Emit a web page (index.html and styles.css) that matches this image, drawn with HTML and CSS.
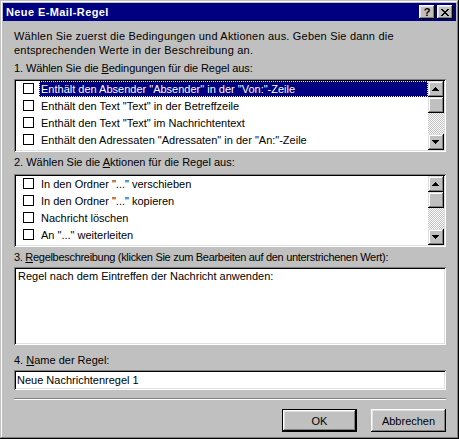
FILE: index.html
```html
<!DOCTYPE html>
<html lang="de">

<head>
    <meta charset="UTF-8">
    <meta name="viewport" content="width=device-width, initial-scale=1.0">
    <title>Neue E-Mail-Regel</title>
    <link rel="stylesheet" href="styles.css">
</head>

<body>
    <div class="window">
        <div class="titlebar">
            <span class="title">Neue E-Mail-Regel</span>
            <div class="caption-buttons">
                <button class="cbtn help">?</button>
                <button class="cbtn close">
                    <svg width="8" height="7" viewBox="0 0 8 7" shape-rendering="crispEdges">
                        <path d="M0 0h2v1h-2zM6 0h2v1h-2zM1 1h2v1h-2zM5 1h2v1h-2zM2 2h4v1h-4zM3 3h2v1h-2zM2 4h4v1h-4zM1 5h2v1h-2zM5 5h2v1h-2zM0 6h2v1h-2zM6 6h2v1h-2z" fill="#000"/>
                    </svg>
                </button>
            </div>
        </div>

        <div class="content">
            <p class="intro">Wählen Sie zuerst die Bedingungen und Aktionen aus. Geben Sie dann die<br>entsprechenden Werte in der Beschreibung an.</p>

            <div class="label label-1">1. Wählen Sie die <u>B</u>edingungen für die Regel aus:</div>
            <div class="listbox list-1">
                <ul class="items">
                    <li class="item selected"><span class="check"></span><span class="text">Enthält den Absender "Absender" in der "Von:"-Zeile</span></li>
                    <li class="item"><span class="check"></span><span class="text">Enthält den Text "Text" in der Betreffzeile</span></li>
                    <li class="item"><span class="check"></span><span class="text">Enthält den Text "Text" im Nachrichtentext</span></li>
                    <li class="item"><span class="check"></span><span class="text">Enthält den Adressaten "Adressaten" in der "An:"-Zeile</span></li>
                </ul>
                <div class="scrollbar">
                    <div class="sb-btn"><svg width="7" height="4" viewBox="0 0 7 4" shape-rendering="crispEdges"><path d="M3 0h1v1h-1zM2 1h3v1h-3zM1 2h5v1h-5zM0 3h7v1h-7z" fill="#000"/></svg></div>
                    <div class="sb-thumb"></div>
                    <div class="sb-track"></div>
                    <div class="sb-btn"><svg width="7" height="4" viewBox="0 0 7 4" shape-rendering="crispEdges"><path d="M0 0h7v1h-7zM1 1h5v1h-5zM2 2h3v1h-3zM3 3h1v1h-1z" fill="#000"/></svg></div>
                </div>
            </div>

            <div class="label label-2">2. Wählen Sie die <u>A</u>ktionen für die Regel aus:</div>
            <div class="listbox list-2">
                <ul class="items">
                    <li class="item"><span class="check"></span><span class="text">In den Ordner "..." verschieben</span></li>
                    <li class="item"><span class="check"></span><span class="text">In den Ordner "..." kopieren</span></li>
                    <li class="item"><span class="check"></span><span class="text">Nachricht löschen</span></li>
                    <li class="item"><span class="check"></span><span class="text">An "..." weiterleiten</span></li>
                </ul>
                <div class="scrollbar">
                    <div class="sb-btn"><svg width="7" height="4" viewBox="0 0 7 4" shape-rendering="crispEdges"><path d="M3 0h1v1h-1zM2 1h3v1h-3zM1 2h5v1h-5zM0 3h7v1h-7z" fill="#000"/></svg></div>
                    <div class="sb-thumb"></div>
                    <div class="sb-track"></div>
                    <div class="sb-btn"><svg width="7" height="4" viewBox="0 0 7 4" shape-rendering="crispEdges"><path d="M0 0h7v1h-7zM1 1h5v1h-5zM2 2h3v1h-3zM3 3h1v1h-1z" fill="#000"/></svg></div>
                </div>
            </div>

            <div class="label label-3">3. <u>R</u>egelbeschreibung (klicken Sie zum Bearbeiten auf den unterstrichenen Wert):</div>
            <div class="description">Regel nach dem Eintreffen der Nachricht anwenden:</div>

            <div class="label label-4">4. <u>N</u>ame der Regel:</div>
            <input type="text" class="name-input" value="Neue Nachrichtenregel 1">

            <div class="separator"></div>

            <div class="footer">
                <button class="btn default">OK</button>
                <button class="btn">Abbrechen</button>
            </div>
        </div>
    </div>
</body>

</html>
```

FILE: styles.css
```css
* {
    box-sizing: border-box;
}

body {
    margin: 0;
    font-family: "Liberation Sans", Arial, sans-serif;
    font-size: 11px;
    color: #000;
    background-color: #c0c0c0;
}

.window {
    width: 459px;
    height: 439px;
    padding: 3px;
    background-color: #c0c0c0;
    box-shadow: inset -1px -1px #000, inset 1px 1px #c0c0c0, inset -2px -2px #808080, inset 2px 2px #fff;
    display: flex;
    flex-direction: column;
}

.titlebar {
    height: 18px;
    background-color: #000080;
    color: #fff;
    display: flex;
    align-items: center;
    padding: 0 3px;
}

.title {
    flex: 1;
    font-weight: bold;
    line-height: 18px;
    letter-spacing: 0.4px;
}

.caption-buttons {
    display: flex;
    gap: 2px;
}

.cbtn {
    width: 16px;
    height: 14px;
    padding: 0;
    border: none;
    background-color: #c0c0c0;
    box-shadow: inset -1px -1px #000, inset 1px 1px #fff, inset -2px -2px #808080, inset 2px 2px #dfdfdf;
    display: flex;
    align-items: center;
    justify-content: center;
    font-family: inherit;
    font-size: 11px;
    font-weight: bold;
    line-height: 12px;
    color: #000;
}

.cbtn svg {
    display: block;
    margin-left: -1px;
}

.content {
    flex: 1;
    padding: 0 10px 0 11px;
    display: flex;
    flex-direction: column;
}

.intro {
    margin: 8px 0 0;
    line-height: 14px;
    letter-spacing: 0.2px;
}

.label {
    line-height: 13px;
    white-space: nowrap;
}

.label-1 { margin-top: 5px; letter-spacing: -0.1px; }
.label-2 { margin-top: 4px; }
.label-3 { margin-top: 4px; letter-spacing: -0.3px; }
.label-4 { margin-top: 9px; }

.listbox {
    height: 73px;
    padding: 2px;
    background-color: #fff;
    box-shadow: inset 1px 1px #808080, inset -1px -1px #fff, inset 2px 2px #000, inset -2px -2px #dfdfdf;
    display: flex;
}

.list-1 { margin-top: 4px; }
.list-2 { margin-top: 5px; }

.items {
    flex: 1;
    margin: 0;
    padding: 0;
    list-style: none;
    overflow: hidden;
}

.item {
    height: 17px;
    display: flex;
    align-items: flex-start;
}

.check {
    width: 11px;
    height: 11px;
    margin: 2px 0 0 7px;
    border: 1px solid #000;
    background-color: #fff;
    flex: none;
}

.text {
    flex: 1;
    height: 16px;
    line-height: 16px;
    margin-left: 5px;
    padding-left: 2px;
    white-space: nowrap;
}

.item.selected .text {
    background-color: #000080;
    color: #fff;
    outline: 1px dotted #ffff80;
    outline-offset: -1px;
}

.scrollbar {
    width: 16px;
    display: flex;
    flex-direction: column;
}

.sb-btn,
.sb-thumb {
    height: 16px;
    background-color: #c0c0c0;
    box-shadow: inset -1px -1px #000, inset 1px 1px #dfdfdf, inset -2px -2px #808080, inset 2px 2px #fff;
    display: flex;
    align-items: center;
    justify-content: center;
}

.sb-btn svg {
    display: block;
    margin-left: -1px;
    margin-top: -1px;
}

.sb-track {
    flex: 1;
    background-image: repeating-conic-gradient(#c0c0c0 0% 25%, #fff 0% 50%);
    background-size: 2px 2px;
}

.description {
    height: 78px;
    margin-top: 3px;
    padding: 3px 4px;
    line-height: 13px;
    background-color: #fff;
    box-shadow: inset 1px 1px #808080, inset -1px -1px #fff, inset 2px 2px #000, inset -2px -2px #dfdfdf;
}

.name-input {
    display: block;
    width: 100%;
    height: 20px;
    margin-top: 3px;
    padding: 3px 3px 4px;
    border: none;
    outline: none;
    font-family: inherit;
    font-size: 11px;
    line-height: 13px;
    color: #000;
    background-color: #fff;
    box-shadow: inset 1px 1px #808080, inset -1px -1px #fff, inset 2px 2px #000, inset -2px -2px #dfdfdf;
}

.separator {
    margin-top: 8px;
    border-top: 1px solid #808080;
    border-bottom: 1px solid #fff;
}

.footer {
    margin-top: 9px;
    display: flex;
    justify-content: flex-end;
    gap: 14px;
}

.btn {
    width: 75px;
    height: 23px;
    padding: 0;
    border: none;
    background-color: #c0c0c0;
    font-family: inherit;
    font-size: 11px;
    color: #000;
    box-shadow: inset -1px -1px #000, inset 1px 1px #fff, inset -2px -2px #808080, inset 2px 2px #dfdfdf;
}

.btn.default {
    box-shadow: inset 0 0 0 1px #000, inset -2px -2px #000, inset 2px 2px #fff, inset -3px -3px #808080, inset 3px 3px #dfdfdf;
}
```
